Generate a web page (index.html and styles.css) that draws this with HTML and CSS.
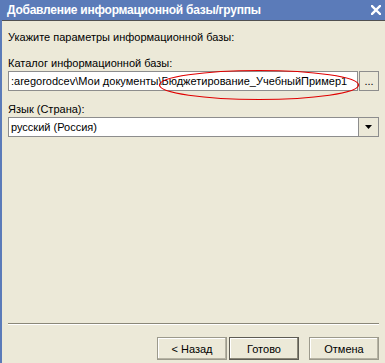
FILE: index.html
```html
<!DOCTYPE html>
<html lang="ru">
<head>
    <meta charset="UTF-8">
    <title>Добавление информационной базы/группы</title>
    <link rel="stylesheet" href="styles.css">
</head>
<body>
    <div class="window">
        <div class="titlebar">
            <span class="title">Добавление информационной базы/группы</span>
            <svg class="close" width="10" height="10" viewBox="0 0 10 10">
                <path d="M1 1L9 9M9 1L1 9" stroke="#fff" stroke-width="2.4" stroke-linecap="square"/>
            </svg>
        </div>
        <div class="content">
            <p class="intro">Укажите параметры информационной базы:</p>

            <label class="caption">Каталог информационной базы:</label>
            <div class="field-row">
                <div class="path-box">
                    <span class="path-text">:aregorodcev\Мои документы\Бюджетирование_УчебныйПример1</span>
                    <svg class="mark" width="202" height="34" viewBox="0 0 202 34">
                        <ellipse cx="101" cy="17" rx="99.5" ry="14.5" fill="none" stroke="#e00000" stroke-width="1.2"/>
                    </svg>
                </div>
                <button class="browse">...</button>
            </div>

            <label class="caption">Язык (Страна):</label>
            <div class="field-row">
                <div class="select-box">русский (Россия)</div>
                <button class="drop">
                    <svg width="7" height="4" viewBox="0 0 7 4"><path d="M0 0H7L3.5 4Z" fill="#000"/></svg>
                </button>
            </div>
        </div>
        <div class="footer">
            <hr class="separator">
            <div class="buttons">
                <button class="btn">&lt; Назад</button>
                <button class="btn default">Готово</button>
                <button class="btn cancel">Отмена</button>
            </div>
        </div>
    </div>
</body>
</html>
```

FILE: styles.css
```css
body {
    margin: 0;
    background-color: #ece9d8;
    font-family: "Liberation Sans", Arial, sans-serif;
    font-size: 11px;
    color: #000;
}
.window {
    width: 385px;
    height: 363px;
    box-sizing: border-box;
    border-left: 2px solid #5b7bb9;
    display: flex;
    flex-direction: column;
    overflow: hidden;
}
.titlebar {
    height: 20px;
    flex: none;
    background-color: #5b7bb9;
    border-bottom: 1px solid #505050;
    display: flex;
    align-items: center;
    justify-content: space-between;
    padding: 0 4px 0 5px;
    color: #fff;
}
.title {
    font-weight: bold;
    font-size: 12px;
    letter-spacing: -0.25px;
}
.close {
    display: block;
}
.content {
    flex: 1;
    padding: 8px 6px 0 6px;
}
.intro {
    margin: 2px 0 14px 0;
}
.caption {
    display: block;
    margin-bottom: 2px;
}
.field-row {
    display: flex;
    height: 20px;
    margin-bottom: 12px;
}
.path-box, .select-box {
    flex: 1;
    position: relative;
    background-color: #fff;
    border: 1px solid #8d8d8d;
    box-sizing: border-box;
    padding: 0 2px;
    line-height: 18px;
    white-space: nowrap;
    overflow: visible;
}
.path-text {
    display: block;
    overflow: hidden;
}
.mark {
    position: absolute;
    right: -3px;
    top: -4px;
}
.browse, .drop {
    width: 20px;
    height: 20px;
    padding: 0;
    margin-left: 1px;
    background-color: #ece9d8;
    border: 1px solid #8d8d8d;
    font-family: inherit;
    font-size: 11px;
}
.drop {
    margin-left: 0;
    border-left: none;
    display: flex;
    align-items: center;
    justify-content: center;
}
.footer {
    padding: 0 6px 3px 6px;
}
.separator {
    border: none;
    border-top: 1px solid #8a8778;
    border-bottom: 1px solid #fff;
    margin: 0 0 12px 0;
}
.buttons {
    display: flex;
    justify-content: flex-end;
    gap: 2px;
}
.btn {
    width: 70px;
    height: 23px;
    font-family: inherit;
    font-size: 11px;
    background-color: #ece9d8;
    border: 1px solid #9c9a8c;
    box-shadow: inset -1px -1px 0 #b6b3a3, inset 1px 1px 0 #fff;
}
.btn.default {
    border-color: #5e5c54;
    box-shadow: inset -1px -1px 0 #8a8778, inset 1px 1px 0 #fff;
}
.btn.cancel {
    margin-left: 8px;
}
```
